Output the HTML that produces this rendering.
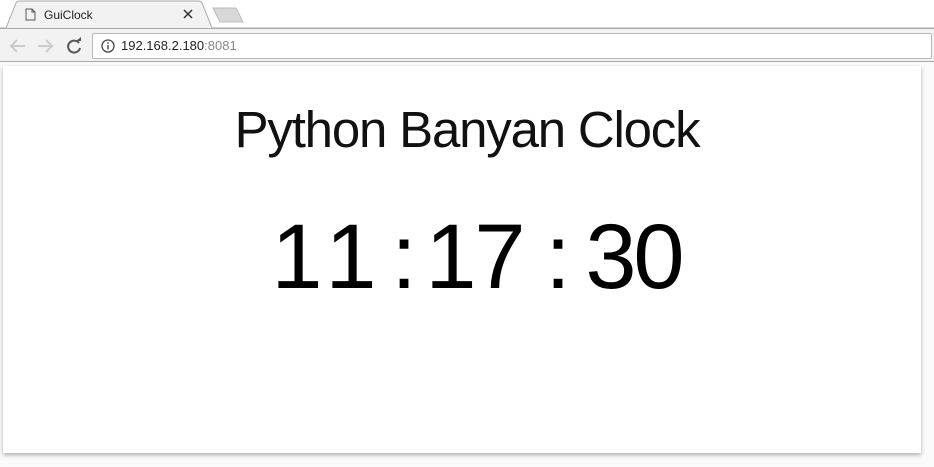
<!DOCTYPE html>
<html><head><style>
*{margin:0;padding:0;box-sizing:border-box}
body{width:934px;height:467px;background:#fafafa;font-family:"Liberation Sans",sans-serif;position:relative;overflow:hidden}
.top{position:absolute;left:0;top:0;width:934px;height:28px;background:#fff}
.tool{position:absolute;left:0;top:28px;width:934px;height:34px;background:#f2f2f2;border-top:1px solid #aaa;border-bottom:1px solid #a8a8a8}
.omni{position:absolute;left:92px;top:4px;width:840px;height:26px;background:#fff;border:1px solid #b8b8b8;border-radius:2px;font-size:13px;line-height:24px;padding-left:28px;color:#222}
.card{position:absolute;left:3px;top:66px;width:918px;height:387px;background:#fff;box-shadow:0 2px 4px rgba(0,0,0,.3)}
.t{position:absolute;left:0;width:934px;text-align:center;top:100px;font-size:51px;letter-spacing:-1.2px;color:#111;white-space:nowrap}
.d{position:absolute;top:207px;width:60px;margin-left:-30px;text-align:center;font-size:92px;line-height:100px;color:#000;white-space:nowrap}
</style></head><body>
<div class="top">
<svg width="934" height="29" style="position:absolute;left:0;top:0">
<path d="M0 28 L6 28 L16 3 Q17 1 20 1 L198 1 Q201 1 202 3 L212 28 L934 28" fill="#f2f2f2" stroke="#aaa"/>
<path d="M213 8 L236 8 L243 22 L220 22 Z" fill="#d8d8d8" stroke="#bbb"/>
<path d="M26 9 L32 9 L35 12 L35 20 L26 20 Z M32 9 L32 12 L35 12" fill="none" stroke="#555"/>
<path d="M184 10 L192 18 M192 10 L184 18" stroke="#333" stroke-width="1.5"/>
</svg>
<div style="position:absolute;left:44px;top:8px;font-size:12px;color:#222">GuiClock</div>
</div>
<div class="tool">
<svg width="90" height="34" style="position:absolute;left:0;top:0">
<path d="M11 17 L25 17 M17 11 L11 17 L17 23" stroke="#ccc" stroke-width="2" fill="none"/>
<path d="M38 17 L52 17 M46 11 L52 17 L46 23" stroke="#ccc" stroke-width="2" fill="none"/>
<path d="M79 14 A6 6 0 1 0 80 19" stroke="#555" stroke-width="2" fill="none"/><path d="M76 12 L81 12 L81 8 Z" fill="#555"/>
</svg>
<div class="omni"><svg width="14" height="14" style="position:absolute;left:8px;top:5px"><circle cx="7" cy="7" r="6" fill="none" stroke="#444" stroke-width="1.3"/><rect x="6.3" y="6" width="1.4" height="4.5" fill="#444"/><rect x="6.3" y="3.3" width="1.4" height="1.4" fill="#444"/></svg>192.168.2.180<span style="color:#888">:8081</span></div>
</div>
<div class="card"></div>
<div class="t">Python Banyan Clock</div>
<div class="d" style="left:297px">1</div>
<div class="d" style="left:351px">1</div>
<div class="d" style="left:404px">:</div>
<div class="d" style="left:451px">1</div>
<div class="d" style="left:500px">7</div>
<div class="d" style="left:558px">:</div>
<div class="d" style="left:611px">3</div>
<div class="d" style="left:659px">0</div>
</body></html>
